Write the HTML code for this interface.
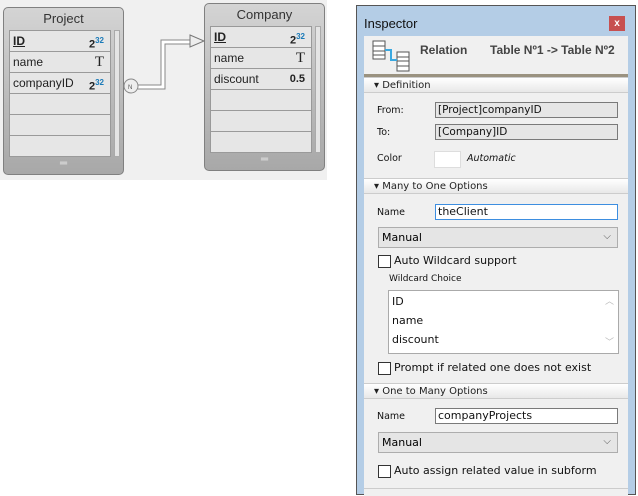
<!DOCTYPE html>
<html><head><style>
*{box-sizing:border-box;margin:0;padding:0}
body{width:638px;height:490px;background:#fff;position:relative;font-family:"Liberation Sans",sans-serif;overflow:hidden}
.canvas{position:absolute;left:0;top:0;width:327px;height:180px;background:#f0f0f0}
.tbl{position:absolute;width:121px;height:168px;border:1px solid #808080;border-radius:5px;background:linear-gradient(#d4d4d4,#b8b8b8 60%,#a8a8a8)}
.tbl .t{position:absolute;left:0;right:0;top:3px;text-align:center;font-size:13px;color:#333}
.tbl .rows{position:absolute;left:5px;top:22px;width:102px;height:127px;background:#e6e6e6;border:1px solid #999}
.tbl .r{height:21px;border-bottom:1px solid #9a9a9a;font-size:12px;line-height:20px;padding-left:3px;color:#222;position:relative}
.tbl .r b{position:absolute;right:6px;top:0;font-size:11px}
.tbl .r sup{color:#1a7ab8;font-size:8px;font-weight:bold}
.tbl .sb{position:absolute;left:110px;top:22px;width:6px;height:127px;background:#e4e4e4;border:1px solid #aaa}
.tbl .ft{position:absolute;left:0;right:0;bottom:0;height:19px;text-align:center;color:#eee;font-size:10px;line-height:18px}
.win{position:absolute;left:356px;top:5px;width:280px;height:490px;background:#b4cde6;border:1px solid #555}
.title{position:absolute;left:7px;top:10px;font-size:13px;color:#111}
.close{position:absolute;left:252px;top:10px;width:16px;height:15px;background:#c75050;color:#fff;font-size:10px;text-align:center;line-height:15px;font-weight:bold}
.body{position:absolute;left:7px;top:30px;width:264px;height:460px;background:#f0f0f0}
.a{position:absolute;font-family:"DejaVu Sans",sans-serif;color:#111}
.sec{position:absolute;left:0;width:264px;height:16px;background:linear-gradient(#fff,#e8e8e8);border-top:1px solid #ccc;border-bottom:1px solid #ccc;font-size:10px;line-height:15px;padding-left:10px;font-family:"DejaVu Sans",sans-serif;color:#222}
.in{position:absolute;background:#fff;border:1px solid #7a7a7a;font-family:"DejaVu Sans",sans-serif;font-size:10.5px;padding-left:2px;line-height:14px;color:#111}
.sel{position:absolute;left:14px;width:240px;height:21px;background:#e5e5e5;border:1px solid #adadad;font-family:"DejaVu Sans",sans-serif;font-size:11px;line-height:19px;padding-left:3px}
.sel:after{content:"⌵";position:absolute;right:6px;top:-1px;color:#555;font-size:10px}
.cb{position:absolute;width:13px;height:13px;border:1px solid #333;background:#fff}
</style></head><body>
<div class="canvas"></div>
<div class="tbl" style="left:3px;top:7px">
<div class="t">Project</div>
<div class="rows">
<div class="r"><u style="font-weight:bold">ID</u><b>2<sup>32</sup></b></div>
<div class="r">name<b style="font-family:'Liberation Serif';font-weight:normal;font-size:15px">T</b></div>
<div class="r">companyID<b>2<sup>32</sup></b></div>
<div class="r"></div><div class="r"></div><div class="r"></div>
</div><div class="sb"></div><div class="ft">═</div></div>
<div class="tbl" style="left:204px;top:3px">
<div class="t">Company</div>
<div class="rows">
<div class="r"><u style="font-weight:bold">ID</u><b>2<sup>32</sup></b></div>
<div class="r">name<b style="font-family:'Liberation Serif';font-weight:normal;font-size:15px">T</b></div>
<div class="r">discount<b>0.5</b></div>
<div class="r"></div><div class="r"></div><div class="r"></div>
</div><div class="sb"></div><div class="ft">═</div></div>
<svg style="position:absolute;left:120px;top:30px" width="90" height="70">
<path d="M18 57 H43 V12 H70" fill="none" stroke="#888" stroke-width="5"/>
<path d="M18 57 H43 V12 H70" fill="none" stroke="#fff" stroke-width="3"/>
<polygon points="70,5 84,11 70,17" fill="#eee" stroke="#777"/>
<circle cx="11" cy="56" r="7" fill="#eee" stroke="#888"/>
<text x="8" y="59" font-size="6" fill="#555">N</text>
</svg>
<div class="win">
<div class="title">Inspector</div>
<div class="close">x</div>
<div class="body">
<svg style="position:absolute;left:8px;top:4px" width="42" height="34">
<g fill="#fff" stroke="#555"><rect x="1" y="1" width="12" height="18"/><line x1="1" y1="6" x2="13" y2="6"/><line x1="1" y1="11" x2="13" y2="11"/><line x1="1" y1="15" x2="13" y2="15"/>
<rect x="25" y="12" width="12" height="19"/><line x1="25" y1="17" x2="37" y2="17"/><line x1="25" y1="21" x2="37" y2="21"/><line x1="25" y1="26" x2="37" y2="26"/></g>
<path d="M13 10 H19 V20 H25" fill="none" stroke="#3aa8e0" stroke-width="2"/></svg>
<div style="position:absolute;left:56px;top:7px;font-size:12px;font-weight:bold;color:#444;font-family:'Liberation Sans',sans-serif">Relation</div>
<div style="position:absolute;left:126px;top:7px;font-size:12px;font-weight:bold;color:#444;font-family:'Liberation Sans',sans-serif;white-space:nowrap">Table Nº1 -&gt; Table Nº2</div>
<div style="position:absolute;left:0;top:38px;width:264px;height:3px;background:#9a9280"></div>
<div class="sec" style="top:41px">▾ Definition</div>
<div class="a" style="left:13px;top:69px;font-size:9.5px">From:</div>
<div class="in" style="left:71px;top:66px;width:183px;height:16px;background:#e6e6e6">[Project]companyID</div>
<div class="a" style="left:13px;top:91px;font-size:9.5px">To:</div>
<div class="in" style="left:71px;top:88px;width:183px;height:16px;background:#e6e6e6">[Company]ID</div>
<div class="a" style="left:13px;top:117px;font-size:9.5px">Color</div>
<div style="position:absolute;left:70px;top:115px;width:27px;height:17px;background:#fff;border:1px solid #ddd"></div>
<div class="a" style="left:103px;top:117px;font-size:9.5px;font-style:italic">Automatic</div>
<div class="sec" style="top:142px">▾ Many to One Options</div>
<div class="a" style="left:13px;top:171px;font-size:9.5px">Name</div>
<div class="in" style="left:71px;top:168px;width:183px;height:16px;border-color:#3d8ee0;font-size:11px">theClient</div>
<div class="sel" style="top:191px">Manual</div>
<div class="cb" style="left:14px;top:219px"></div>
<div class="a" style="left:30px;top:218px;font-size:11px">Auto Wildcard support</div>
<div class="a" style="left:25px;top:238px;font-size:9px">Wildcard Choice</div>
<div class="in" style="left:24px;top:254px;width:231px;height:64px;border-color:#aaa;font-size:11px;line-height:19px;padding:1px 3px">ID<br>name<br>discount
<span style="position:absolute;right:4px;top:2px;color:#bbb;font-size:9px">︿</span><span style="position:absolute;right:4px;bottom:0;color:#bbb;font-size:9px">﹀</span></div>
<div class="cb" style="left:14px;top:326px"></div>
<div class="a" style="left:30px;top:325px;font-size:11px">Prompt if related one does not exist</div>
<div class="sec" style="top:347px">▾ One to Many Options</div>
<div class="a" style="left:13px;top:375px;font-size:9.5px">Name</div>
<div class="in" style="left:71px;top:372px;width:183px;height:16px;font-size:11px">companyProjects</div>
<div class="sel" style="top:396px">Manual</div>
<div class="cb" style="left:14px;top:429px"></div>
<div class="a" style="left:30px;top:428px;font-size:11px">Auto assign related value in subform</div>
<div style="position:absolute;left:0;top:452px;width:264px;height:1px;background:#ccc"></div>
</div></div>
</body></html>
